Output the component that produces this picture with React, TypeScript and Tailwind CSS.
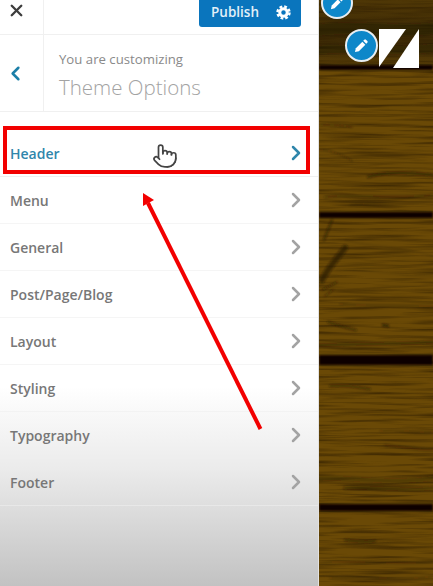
import { ChevronLeft, ChevronRight, Pointer, X } from 'lucide-react';

const sections = ['Menu', 'General', 'Post/Page/Blog', 'Layout', 'Styling', 'Typography', 'Footer'];

// dark grain strokes on the planks: [path, width, opacity]
const grain: [string, number, number][] = [
  ['M319 30 C360 24 400 34 433 28', 12, 0.4],
  ['M319 50 C350 46 390 54 433 48', 9, 0.35],
  ['M320 125 C335 124 345 126 352 127', 1.5, 0.45],
  ['M319 150 C335 150 348 158 352 161', 1.5, 0.3],
  ['M368 177 C390 171 410 173 433 175', 2.5, 0.55],
  ['M325 197 C360 194 390 199 433 195', 2, 0.4],
  ['M350 205 C375 202 405 205 433 201', 1.2, 0.3],
  ['M345 240 C375 248 395 245 433 256', 1, 0.2],
  ['M335 270 C375 268 405 278 433 276', 1, 0.2],
  ['M340 304 C365 306 395 305 433 306', 1.5, 0.3],
  ['M328 322 C340 326 350 329 356 330', 2, 0.55],
  ['M383 325 L388 326', 2.5, 0.7],
  ['M319 345 C360 344 400 344 433 342', 2.5, 0.55],
  ['M330 386 C350 385 362 388 370 389', 2, 0.55],
  ['M380 431 C400 429 420 433 433 432', 1.5, 0.25],
  ['M385 445 C405 447 420 451 433 450', 2.5, 0.25],
  ['M319 478 C360 478 400 484 433 478', 5, 0.3],
  ['M345 488 C370 486 410 492 433 488', 4, 0.3],
  ['M345 540 C360 542 370 542 375 541', 2.5, 0.5],
  ['M319 563 C360 559 400 566 433 562', 1.2, 0.35],
  ['M330 578 C365 575 400 582 433 576', 1.5, 0.25],
];

function Wood() {
  return (
    <svg viewBox="319 0 114 586" className="h-full w-full" preserveAspectRatio="none">
      <defs>
        <filter id="soft" x="-5%" y="-5%" width="110%" height="110%">
          <feGaussianBlur stdDeviation="0.9" />
        </filter>
        <filter id="streaks" x="0" y="0" width="100%" height="100%" colorInterpolationFilters="sRGB">
          <feTurbulence type="fractalNoise" baseFrequency="0.012 0.28" numOctaves="3" seed="7" />
          <feColorMatrix type="matrix" values="0 0 0 0 0.15  0 0 0 0 0.09  0 0 0 0 0  1.5 0 0 0 -0.66" />
          <feGaussianBlur stdDeviation="0.5" />
        </filter>
        <linearGradient id="topShade" x1="0" y1="0" x2="0" y2="1">
          <stop offset="0" stopColor="#4f3706" />
          <stop offset="0.6" stopColor="#3d2a05" />
          <stop offset="1" stopColor="#5a3f07" />
        </linearGradient>
      </defs>
      <rect x="319" y="0" width="114" height="586" fill="#6a4906" />
      <rect x="319" y="0" width="114" height="68" fill="url(#topShade)" />
      <rect x="319" y="0" width="114" height="586" filter="url(#streaks)" />
      <g filter="url(#soft)" fill="none" stroke="#1f1402" strokeLinecap="round">
        {grain.map(([d, w, o]) => (
          <path key={d} d={d} strokeWidth={w} strokeOpacity={o} />
        ))}
        {/* knot at the left of the second plank */}
        <path d="M322 280 C328 268 336 260 345 248" strokeWidth="6" strokeOpacity="0.6" />
        <path d="M324 240 L332 220" strokeWidth="2.5" strokeOpacity="0.5" />
        <path d="M322 290 L337 282 M325 296 L333 290" strokeWidth="1.5" strokeOpacity="0.5" />
      </g>
      <g filter="url(#soft)" fill="#0a0500">
        <rect x="319" y="65" width="114" height="5" />
        <rect x="319" y="212" width="114" height="6" />
        <rect x="319" y="355" width="114" height="10" />
        <rect x="319" y="504" width="114" height="7" />
      </g>
    </svg>
  );
}

// solid pencil glyph of the customizer shortcuts
function PencilGlyph({ size }: { size: number }) {
  return (
    <svg width={size} height={size} viewBox="0 0 16 16" fill="#ffffff">
      <path d="M11 1.800 a1.200 1.200 0 0 1 1.700 0 l1.500 1.500 a1.200 1.200 0 0 1 0 1.700 l-1.200 1.200 -3.200 -3.200 z" />
      <path d="M8.900 3.900 l3.200 3.200 -6.900 6.900 -4.200 1 1 -4.200 z" />
    </svg>
  );
}

function Gear() {
  return (
    <svg width="15" height="15" viewBox="0 0 16 16" fill="none" stroke="#ffffff">
      <circle cx="8" cy="8" r="4" strokeWidth="3.2" />
      <circle cx="8" cy="8" r="6.4" strokeWidth="2.6" strokeDasharray="2.9 2.125" />
    </svg>
  );
}

export default function App() {
  return (
    <div className="relative flex h-[586px] w-[433px] overflow-hidden font-['Open_Sans',sans-serif]">
      <aside className="flex h-full w-[319px] shrink-0 flex-col border-r border-[#e2e2e2] bg-[linear-gradient(to_bottom,#ffffff_66%,#ebebeb_80%,#c2c2c2_100%)]">
        <div className="flex h-[35px] shrink-0 border-b border-[#f0f0f0]">
          <div className="flex w-[44px] items-start justify-center border-r border-[#f0f0f0] pr-[10px] pt-[1px]">
            <X size={19} strokeWidth={3} className="text-[#3d3d3d]" />
          </div>
          <div className="flex flex-1 justify-end pr-[17px]">
            <button className="flex h-[27px] w-[102px] items-center justify-between rounded-b-[3px] bg-[#0a75bd] pb-[3px] pl-[12px] pr-[10px] text-[13.5px] font-semibold text-[#e3f0f8]">
              Publish
              <Gear />
            </button>
          </div>
        </div>

        <div className="flex h-[77px] shrink-0 border-b border-[#f0f0f0]">
          <div className="flex w-[44px] items-center justify-center border-r border-[#f0f0f0] pr-[12px]">
            <ChevronLeft size={23} strokeWidth={2.6} className="text-[#1c7fa8]" />
          </div>
          <div className="pl-[15px] pt-[14px]">
            <p className="text-[13.2px] leading-[20px] text-[#8a8a8a]">You are customizing</p>
            <p className="mt-[4px] text-[20.5px] leading-[28px] font-light text-[#a3a3a3]">Theme Options</p>
          </div>
        </div>

        <div className="mt-[18px] flex h-[47px] shrink-0 items-center justify-between border-b border-[#f0f0f0] px-[10px] text-[14px] font-semibold text-[#2f86ab]">
          Header
          <ChevronRight size={24} strokeWidth={2.5} className="text-[#2f86ab]" />
        </div>
        {sections.map(name => (
          <div key={name} className="flex h-[47px] shrink-0 items-center justify-between border-b border-[#eeeeee]/60 px-[10px] text-[14px] font-semibold text-[#777777]">
            {name}
            <ChevronRight size={24} strokeWidth={2.5} className="text-[#a3a3a3]" />
          </div>
        ))}
      </aside>

      <main className="h-full flex-1">
        <Wood />
      </main>

      {/* video annotation */}
      <div className="absolute left-[3px] top-[126px] h-[48px] w-[307px] border-[4px] border-[#f20000]" />
      <Pointer size={26} strokeWidth={1.6} fill="#ffffff" className="absolute left-[152px] top-[143px] text-[#444444]" />
      <svg className="absolute inset-0" width="433" height="586" viewBox="0 0 433 586" fill="none">
        <path d="M260.500 429 L148 203" stroke="#f20000" strokeWidth="4" />
        <path d="M143 193 L143 206 L154 200 Z" fill="#f20000" />
      </svg>

      {/* customizer edit shortcuts */}
      <div className="absolute left-[321px] top-[-13px] flex h-[32px] w-[32px] items-center justify-center rounded-full border-2 border-[#e8eef2] bg-[#0e87c9]">
        <PencilGlyph size={14} />
      </div>
      <div className="absolute left-[345px] top-[29px] flex h-[33px] w-[33px] items-center justify-center rounded-full border-2 border-[#e8eef2] bg-[#0e87c9]">
        <PencilGlyph size={15} />
      </div>
      <svg className="absolute left-[379px] top-[29px]" width="41" height="40" viewBox="0 0 41 40" fill="#ffffff">
        <path d="M0 0 H27 L0 38 Z" />
        <path d="M40 0 V39 H14 Z" />
      </svg>
    </div>
  );
}
